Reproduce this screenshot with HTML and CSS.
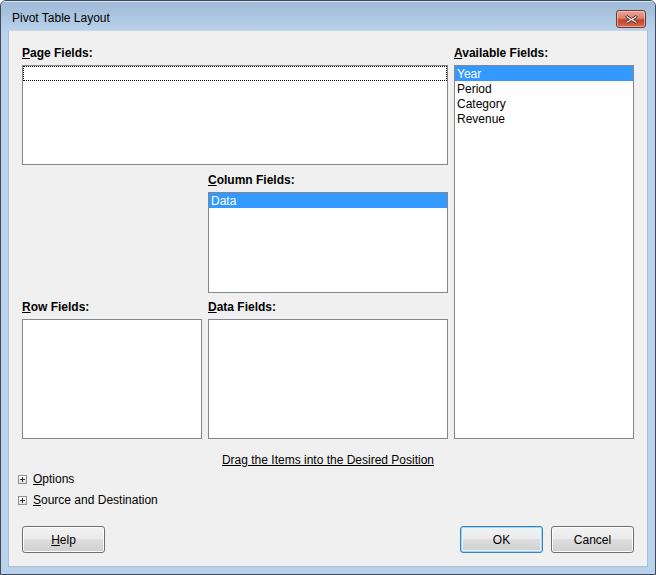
FILE: index.html
```html
<!DOCTYPE html>
<html>
<head>
<meta charset="utf-8">
<link rel="stylesheet" href="styles.css">
</head>
<body>
<div class="window">
  <div class="titlebar">
    <span class="title">Pivot Table Layout</span>
    <button class="close" aria-label="Close">
      <svg width="17" height="11" viewBox="0 0 17 11">
        <path d="M4 1.5 L8.5 4.5 L13 1.5 L14.5 3 L10.5 5.5 L14.5 8 L13 9.5 L8.5 6.5 L4 9.5 L2.5 8 L6.5 5.5 L2.5 3 Z" fill="#fff" stroke="#4a2a25" stroke-width="1" stroke-linejoin="round"/>
      </svg>
    </button>
  </div>
  <div class="client">
    <div class="layout">
      <div class="label page-label"><u>P</u>age Fields:</div>
      <div class="list page-box"><div class="focus"></div></div>

      <div class="label avail-label"><u>A</u>vailable Fields:</div>
      <div class="list avail-box">
        <div class="item selected">Year</div>
        <div class="item">Period</div>
        <div class="item">Category</div>
        <div class="item">Revenue</div>
      </div>

      <div class="label col-label"><u>C</u>olumn Fields:</div>
      <div class="list col-box"><div class="item selected">Data</div></div>

      <div class="label row-label"><u>R</u>ow Fields:</div>
      <div class="list row-box"></div>

      <div class="label data-label"><u>D</u>ata Fields:</div>
      <div class="list data-box"></div>
    </div>

    <div class="hint"><span class="hint-text">Drag the Items into the Desired Position</span></div>

    <div class="expanders">
      <div class="expander"><span class="plus"></span><span><u>O</u>ptions</span></div>
      <div class="expander"><span class="plus"></span><span><u>S</u>ource and Destination</span></div>
    </div>

    <div class="buttons">
      <button class="btn"><u>H</u>elp</button>
      <div class="right-buttons">
        <button class="btn default">OK</button>
        <button class="btn">Cancel</button>
      </div>
    </div>
  </div>
</div>
</body>
</html>
```

FILE: styles.css
```css
* { box-sizing: border-box; }
html, body { margin: 0; padding: 0; }
body {
  width: 656px;
  height: 575px;
  font-family: "Liberation Sans", Arial, sans-serif;
  font-size: 12px;
  color: #000;
  background: #fff;
}
.window {
  width: 656px;
  height: 575px;
  border: 1px solid #3d4b5a;
  border-radius: 6px 6px 0 0;
  background: #b9d1ea;
  display: flex;
  flex-direction: column;
  overflow: hidden;
}
.titlebar {
  height: 29px;
  flex: none;
  display: flex;
  align-items: flex-start;
  justify-content: space-between;
  padding: 0 9px 0 11px;
  background: linear-gradient(#9fbad7 0%, #a8c2de 40%, #b9d1ea 100%);
  box-shadow: inset 0 1px 0 #d4e2f1;
}
.title {
  margin-top: 10px;
  font-family: "Liberation Sans", Arial, sans-serif;
  font-size: 12px;
  color: #000;
}
.close {
  margin-top: 9px;
  width: 30px;
  height: 18px;
  padding: 0;
  border: 1px solid #6e3a31;
  border-radius: 3px;
  background: linear-gradient(#e7a699 0%, #d8826f 45%, #c4432c 55%, #d46a4f 100%);
  box-shadow: inset 0 0 0 1px rgba(255,220,210,0.55);
  display: flex;
  align-items: center;
  justify-content: center;
}
.client {
  flex: 1;
  margin: 0 7px 7px 7px;
  background: #f0f0f0;
  border: 1px solid #a9bdd2;
  border-top-color: #c8d8ea;
  padding: 14px 13px 0 13px;
  display: flex;
  flex-direction: column;
}
.layout {
  display: grid;
  grid-template-columns: 180px 240px 180px;
  grid-template-rows: 20px 100px 27px 101px 26px 120px;
  column-gap: 6px;
}
.label {
  font-weight: bold;
  line-height: 15px;
  align-self: end;
  margin-bottom: 4px;
}
.list {
  background: #fff;
  border: 1px solid #828790;
  padding: 0;
  overflow: hidden;
}
.page-label { grid-column: 1 / 3; grid-row: 1; }
.page-box { grid-column: 1 / 3; grid-row: 2; }
.avail-label { grid-column: 3; grid-row: 1; }
.avail-box { grid-column: 3; grid-row: 2 / 7; }
.col-label { grid-column: 2; grid-row: 3; }
.col-box { grid-column: 2; grid-row: 4; }
.row-label { grid-column: 1; grid-row: 5; }
.row-box { grid-column: 1; grid-row: 6; }
.data-label { grid-column: 2; grid-row: 5; }
.data-box { grid-column: 2; grid-row: 6; }
.focus {
  height: 15px;
  border: 1px dotted #000;
}
.item {
  height: 15px;
  line-height: 15px;
  padding: 1px 0 0 2px;
  white-space: nowrap;
}
.item.selected {
  background: #3399ff;
  color: #fff;
}
.hint {
  display: flex;
  justify-content: center;
  margin-top: 14px;
  line-height: 15px;
}
.hint-text { text-decoration: underline; }
.expanders {
  margin-top: 4px;
  margin-left: -4px;
  display: flex;
  flex-direction: column;
  gap: 6px;
}
.expander {
  display: flex;
  align-items: center;
  gap: 6px;
  line-height: 15px;
}
.plus {
  position: relative;
  width: 9px;
  height: 9px;
  border: 1px solid #8f8f8f;
  background: linear-gradient(#fefefe, #e0e0e0);
  flex: none;
}
.plus::before, .plus::after {
  content: "";
  position: absolute;
  background: #303030;
}
.plus::before { left: 1px; top: 3px; width: 5px; height: 1px; }
.plus::after { left: 3px; top: 1px; width: 1px; height: 5px; }
.buttons {
  margin-top: 18px;
  display: flex;
  justify-content: space-between;
}
.right-buttons {
  display: flex;
  gap: 8px;
}
.btn {
  width: 83px;
  height: 27px;
  padding: 0;
  font-family: "Liberation Sans", Arial, sans-serif;
  font-size: 12px;
  color: #000;
  border: 1px solid #707070;
  border-radius: 3px;
  background: linear-gradient(#f2f2f2 0%, #ebebeb 49%, #dddddd 50%, #cfcfcf 100%);
  box-shadow: inset 0 0 0 1px #fcfcfc;
}
.btn.default {
  border-color: #3c7fb1;
  box-shadow: inset 0 0 0 1px #9ad6f5, inset 0 0 0 2px #e3f4fc;
}
```
